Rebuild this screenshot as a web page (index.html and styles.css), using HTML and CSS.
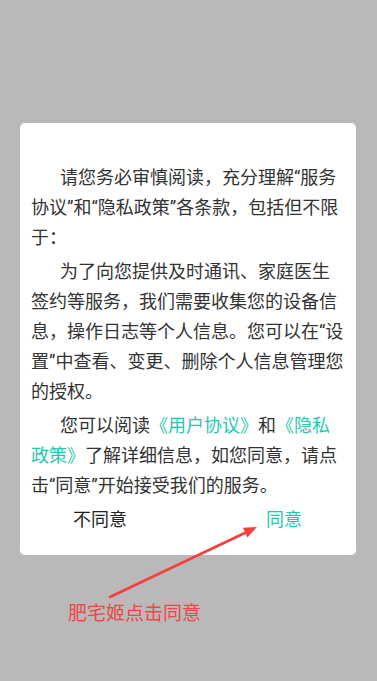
FILE: index.html
```html
<!DOCTYPE html>
<html lang="zh-CN">
<head>
<meta charset="utf-8">
<title>隐私政策</title>
<link rel="stylesheet" href="styles.css">
</head>
<body>
<div class="screen">
  <div class="dialog">
    <div class="content">
      <p class="para">请您务必审慎阅读，充分理解“服务协议”和“隐私政策”各条款，包括但不限于：</p>
      <p class="para">为了向您提供及时通讯、家庭医生签约等服务，我们需要收集您的设备信息，操作日志等个人信息。您可以在“设置”中查看、变更、删除个人信息管理您的授权。</p>
      <p class="para">您可以阅读<span class="link">《用户协议》</span>和<span class="link">《隐私政策》</span>了解详细信息，如您同意，请点击“同意”开始接受我们的服务。</p>
    </div>
    <div class="actions">
      <span class="btn btn-reject">不同意</span>
      <span class="btn btn-accept">同意</span>
    </div>
  </div>
  <div class="note">肥宅姬点击同意</div>
  <svg class="arrow" width="377" height="681" viewBox="0 0 377 681">
    <line x1="110" y1="597" x2="249" y2="531" stroke="#f53e3e" stroke-width="2.6" stroke-linecap="round"/>
    <polygon points="257,527 247.4,537.4 243,527.8" fill="#f53e3e"/>
  </svg>
</div>
</body>
</html>
```

FILE: styles.css
```css
html, body {
  margin: 0;
  padding: 0;
}
body {
  background: #b9b9b9;
  font-family: Roboto, "Noto Sans CJK SC", sans-serif;
}
.screen {
  position: relative;
  width: 377px;
  height: 681px;
  overflow: hidden;
  padding-top: 123px;
  box-sizing: border-box;
}
.dialog {
  margin-left: 20px;
  width: 336px;
  background: #fff;
  border-radius: 5px;
  padding: 40px 11px 20px 11px;
  box-sizing: border-box;
}
.content {
  width: 314px;
}
.para {
  margin: 0 0 4px 0;
  font-size: 18px;
  line-height: 30px;
  color: #333;
  text-indent: 29px;
}
.link {
  color: #1fc8b2;
}
.actions {
  display: flex;
  justify-content: space-between;
  margin-top: 3px;
  padding: 0 43px 0 42px;
  font-size: 18px;
  line-height: 30px;
}
.btn-reject {
  color: #222;
}
.btn-accept {
  color: #1fc8b2;
}
.note {
  margin: 45px 0 0 68px;
  font-family: "Noto Sans CJK SC", sans-serif;
  font-size: 19px;
  line-height: 24px;
  color: #f24444;
}
.arrow {
  position: absolute;
  left: 0;
  top: 0;
}
```
